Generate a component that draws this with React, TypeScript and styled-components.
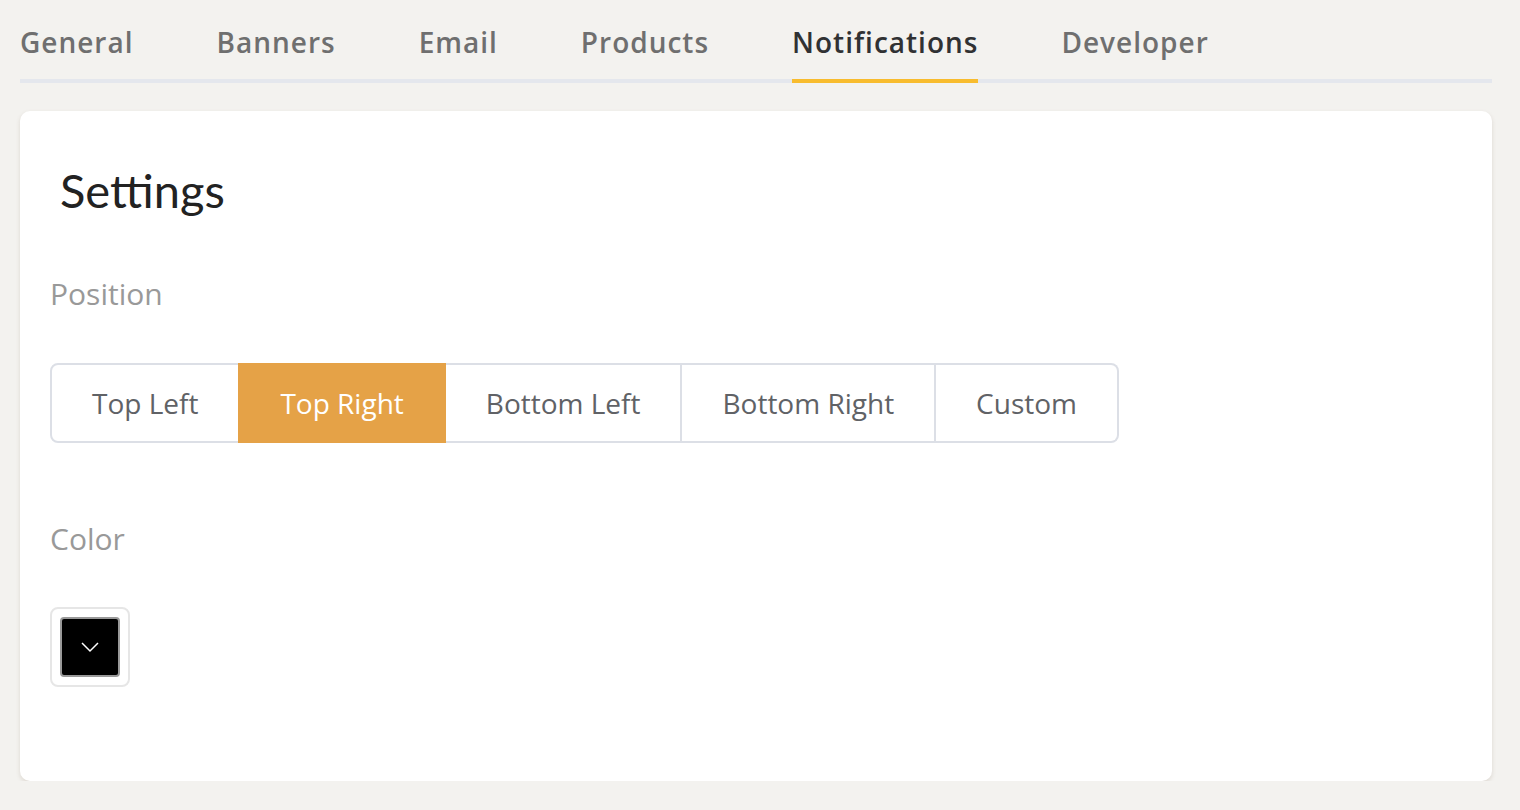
import React, { useState } from "react";
import styled, { createGlobalStyle } from "styled-components";

const GlobalStyle = createGlobalStyle`
  body {
    margin: 0;
    background: #f3f2ef;
    font-family: "Open Sans", "Liberation Sans", sans-serif;
  }
`;

const tabs = ["General", "Banners", "Email", "Products", "Notifications", "Developer"];
const positions = ["Top Left", "Top Right", "Bottom Left", "Bottom Right", "Custom"];

const Page = styled.div`
  padding-left: 20px;
  width: 1472px;
`;

const TabBar = styled.div`
  display: flex;
  gap: 83px;
  border-bottom: 4px solid #e4e7ed;
`;

const Tab = styled.div<{ $active?: boolean }>`
  position: relative;
  padding: 22px 0 17px;
  font-size: 28px;
  line-height: 40px;
  font-weight: 600;
  letter-spacing: 1px;
  color: ${(p) => (p.$active ? "#303133" : "#6f6f6f")};
  cursor: pointer;

  &::after {
    content: "";
    position: absolute;
    left: 0;
    right: 0;
    bottom: -4px;
    height: 4px;
    background: ${(p) => (p.$active ? "#f8bc2e" : "transparent")};
  }
`;

const Card = styled.div`
  margin-top: 28px;
  background: #fff;
  border-radius: 10px;
  box-shadow: 0 2px 4px rgba(120, 100, 80, 0.18);
  padding: 40px 30px 94px;
`;

const Heading = styled.h2`
  margin: 9px 0 0;
  padding-left: 10px;
  font-family: Lato, "Open Sans", sans-serif;
  font-weight: 400;
  font-size: 47px;
  line-height: 60px;
  color: #222;
`;

const Label = styled.div<{ $top: number }>`
  margin-top: ${(p) => p.$top}px;
  font-size: 30px;
  line-height: 40px;
  color: #999;
`;

const Segmented = styled.div`
  display: inline-flex;
  margin-top: 49px;
`;

const Segment = styled.button<{ $active?: boolean }>`
  height: 80px;
  padding: 0 40px;
  font-family: "Open Sans", "Liberation Sans", sans-serif;
  font-size: 28px;
  color: ${(p) => (p.$active ? "#fff" : "#606266")};
  background: ${(p) => (p.$active ? "#e5a247" : "#fff")};
  border: 2px solid ${(p) => (p.$active ? "#e5a247" : "#dcdfe6")};
  border-left-width: 0;
  box-shadow: ${(p) => (p.$active ? "-2px 0 0 0 #e5a247" : "none")};
  cursor: pointer;

  &:first-child {
    border-left-width: 2px;
    border-radius: 8px 0 0 8px;
  }
  &:last-child {
    border-radius: 0 8px 8px 0;
  }
`;

const Picker = styled.div`
  margin-top: 48px;
  width: 80px;
  height: 80px;
  box-sizing: border-box;
  border: 2px solid #e6e6e6;
  border-radius: 8px;
  padding: 8px;
`;

const Swatch = styled.div`
  width: 100%;
  height: 100%;
  box-sizing: border-box;
  background: #000;
  border: 2px solid #999;
  border-radius: 4px;
  display: flex;
  align-items: center;
  justify-content: center;
`;

export default function App() {
  const [active, setActive] = useState("Top Right");
  return (
    <>
      <GlobalStyle />
      <Page>
        <TabBar>
          {tabs.map((t) => (
            <Tab key={t} $active={t === "Notifications"}>
              {t}
            </Tab>
          ))}
        </TabBar>
        <Card>
          <Heading>Settings</Heading>
          <Label $top={54}>Position</Label>
          <Segmented>
            {positions.map((p) => (
              <Segment key={p} $active={p === active} onClick={() => setActive(p)}>
                {p}
              </Segment>
            ))}
          </Segmented>
          <Label $top={76}>Color</Label>
          <Picker>
            <Swatch>
              <svg width="20" height="12" viewBox="0 0 20 12">
                <polyline points="2,2 10,10 18,2" fill="none" stroke="#fff" strokeWidth="1.5" />
              </svg>
            </Swatch>
          </Picker>
        </Card>
      </Page>
    </>
  );
}
